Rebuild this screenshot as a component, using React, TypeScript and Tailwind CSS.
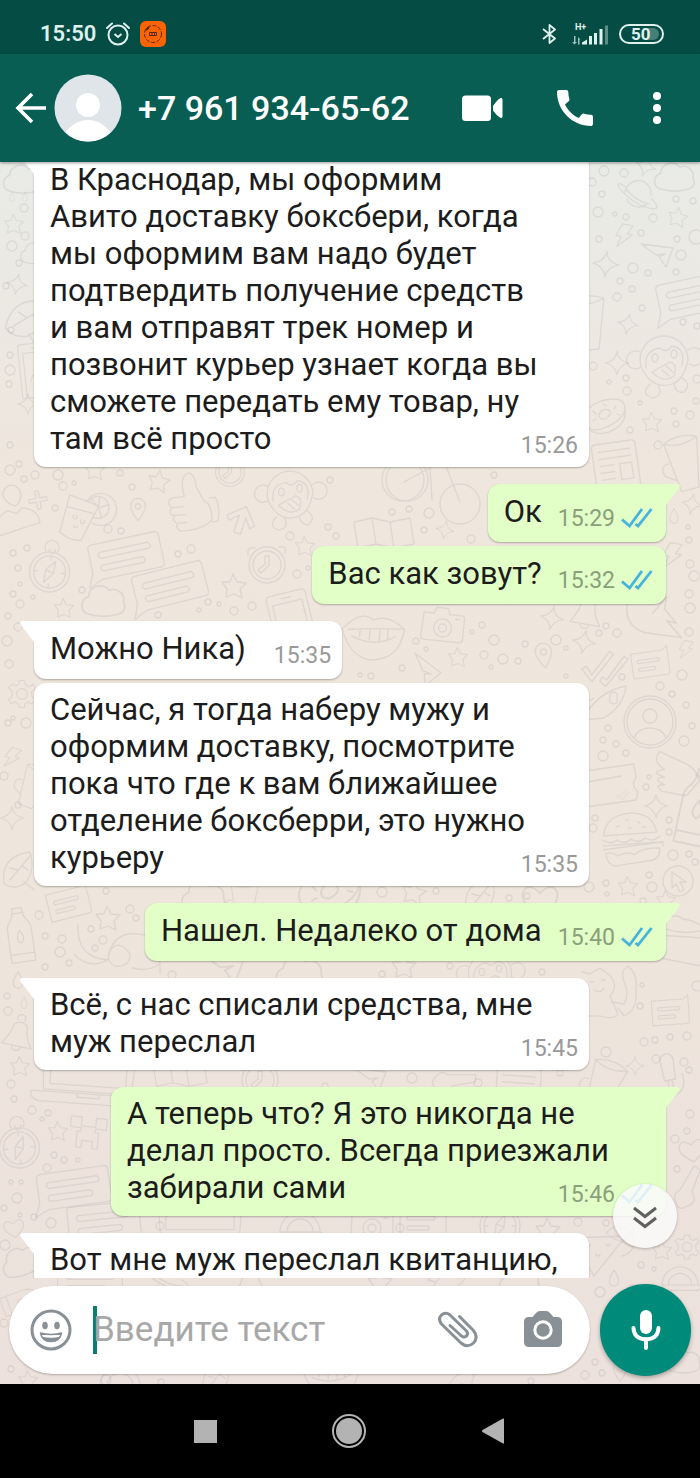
import type { ReactNode } from 'react';

interface Message {
  id: number;
  text: string;
  time?: string;
  out?: boolean;
  tail?: boolean;
  wide?: boolean;
}

const messages: Message[] = [
  {
    id: 1,
    text: 'В Краснодар, мы оформим\nАвито доставку боксбери, когда\nмы оформим вам надо будет\nподтвердить получение средств\nи вам отправят трек номер и\nпозвонит курьер узнает когда вы\nсможете передать ему товар, ну\nтам всё просто',
    time: '15:26',
    tail: true,
    wide: true,
  },
  { id: 2, text: 'Ок', time: '15:29', out: true, tail: true },
  { id: 3, text: 'Вас как зовут?', time: '15:32', out: true },
  { id: 4, text: 'Можно Ника)', time: '15:35', tail: true },
  {
    id: 5,
    text: 'Сейчас, я тогда наберу мужу и\nоформим доставку, посмотрите\nпока что где к вам ближайшее\nотделение боксберри, это нужно\nкурьеру',
    time: '15:35',
    wide: true,
  },
  { id: 6, text: 'Нашел. Недалеко от дома', time: '15:40', out: true, tail: true },
  { id: 7, text: 'Всё, с нас списали средства, мне\nмуж переслал', time: '15:45', tail: true, wide: true },
  {
    id: 8,
    text: 'А теперь что? Я это никогда не\nделал просто. Всегда приезжали\nзабирали сами',
    time: '15:46',
    out: true,
    tail: true,
    wide: true,
  },
  { id: 9, text: 'Вот мне муж переслал квитанцию,', tail: true, wide: true },
];

// Line drawings used by the wallpaper, each centred on 0,0
const shapes: Record<string, string> = {
  star: 'M-1 -12L3 -4L12 -3L6 3L8 12L0 8L-8 11L-7 3L-12 -4L-4 -4Z',
  spark: 'M0 -13Q1 -2 13 0Q2 2 0 13Q-2 2 -13 0Q-2 -2 0 -13Z',
  plus: 'M-2 -10H2V-2H10V2H2V10H-2V2H-10V-2H-2Z',
  bolt: 'M-4 -13H8L3 -3H9L-6 13L-3 1H-9Z',
  drop: 'M0 -9Q6 0 5 4A5 5 0 0 1 -5 4Q-6 0 0 -9Z',
  cloud: 'M-13 9A7 7 0 0 1 -12 -4A9 9 0 0 1 4 -9A8 8 0 0 1 15 0A6 6 0 0 1 12 9Q0 13 -13 9Z',
  heart: 'M0 12Q-15 2 -12 -6Q-8 -13 0 -5Q8 -13 12 -6Q15 2 0 12Z',
  chat: 'M-36 -14Q-36 -18 -32 -18H32Q36 -18 36 -14V14Q36 18 32 18H-28L-42 24L-36 10ZM-25 -9H24Q28 -5 24 -3H-25Q-29 -6 -25 -9M-25 4H16Q20 7 16 10H-25Q-29 7 -25 4',
  note: 'M-20 -15H20L26 -20V12Q26 16 22 16H-20ZM-12 -6H14Q16 -4 14 -2H-12Q-14 -4 -12 -6M-12 4H8Q10 6 8 8H-12Q-14 6 -12 4',
  compass: 'M-20 4A20 20 0 1 0 20 4A20 20 0 1 0 -20 4M-16 4A16 16 0 1 0 16 4A16 16 0 1 0 -16 4M5 -7L-4 2L-5 15L4 5ZM-4 2L4 5M-6 -17A7 7 0 1 1 6 -17M-2 -19A3 3 0 1 0 3 -19M0 -12V-8M0 16V20M-16 4H-12M12 4H16',
  gear: 'M-3 -15H3L4 -10L8 -8L12 -11L15 -6L11 -3V3L15 7L11 11L7 9L3 11V15H-3L-4 11L-8 9L-12 11L-15 6L-11 3V-3L-15 -7L-11 -11L-7 -9L-4 -10ZM-6 0A6 6 0 1 0 6 0A6 6 0 1 0 -6 0',
  planet: 'M-13 0A13 13 0 0 1 13 -1M-10 7A13 13 0 0 0 10 9M-14 -5Q-24 -10 -20 -3Q0 13 18 12Q25 10 14 2M-13 -3Q0 8 13 8',
  plane: 'M-16 -10L16 -6L9 13L2 3L8 0L-1 1Z',
  monkey: 'M-24 2A24 24 0 1 1 24 2Q20 22 8 26Q-4 30 -14 22Q-24 12 -24 2ZM-24 -6A9 9 0 1 0 -23 9M24 -8A9 9 0 1 1 25 6M-18 10Q-20 -8 -4 -10Q2 -4 8 -12Q22 -10 18 8M-12 0A3 4 0 1 0 -6 0A3 4 0 1 0 -12 0M7 -4A3 4 0 1 0 13 -4A3 4 0 1 0 7 -4M-12 14L6 4Q14 6 10 18Q0 26 -12 14M-2 12L5 18M2 8L9 14M-14 26Q-24 36 -12 40Q0 38 -6 27M10 26Q12 36 20 34Q28 26 18 20',
  donut: 'M-20 6Q-24 -6 -4 -14Q18 -20 20 -8Q20 6 -4 14Q-16 18 -20 6M-19 10Q-12 22 4 17Q22 10 20 -6M-6 0Q-4 -7 4 -5Q8 0 0 4Q-6 5 -6 0M-12 -4L-9 -1M-2 -11L1 -9M11 -9L9 -6M-12 6L-9 4M12 -1L15 0',
  page: 'M-24 -20Q-24 -24 -20 -24H16Q20 -24 20 -20V28M-24 -20V28M-18 -16H14M-18 -9H14M-18 -2H-4M-18 5H-4M-18 12H-4M2 -2H14V14H2Z',
  thumb: 'M-16 -8H-5Q-8 -30 2 -31Q8 -29 8 -16L14 -2Q22 2 20 18Q12 26 -4 26H-12Q-18 22 -14 18Q-20 16 -17 10Q-23 8 -19 2Q-24 -6 -16 -8M-19 2H-7M-17 10H-6M-14 18H-5M20 -4H26Q30 6 26 20H20',
  glass: 'M-12 -16L18 -8L4 28Q-8 30 -18 22ZM-13 -4L13 0M6 -12A16 16 0 1 1 14 10M8 -12A11 11 0 1 1 14 4M18 -6L10 -14M18 -6L27 -10M18 -6L22 3M18 -6L18 -17M-6 4A2 2 0 1 0 -3 4M2 8A2 2 0 1 0 5 8M-5 14A2 2 0 1 0 -1 14',
  person: 'M-9 -16A9 10 0 1 1 9 -14Q6 -4 2 -4Q-6 -6 -9 -16M-20 24Q-20 2 -6 0L2 4L8 -1Q24 2 24 16Z',
  arrow: 'M-4 14V-4L-12 4L-16 0L0 -14L14 2L10 6L3 -3V14Z',
  clock: 'M-18 0A18 18 0 1 0 18 0A18 18 0 1 0 -18 0M-14 0A14 14 0 1 0 14 0A14 14 0 1 0 -14 0M-2 -9H2V0L-6 8L-9 5L-2 -1ZM-19 -10Q-20 -19 -12 -17M12 -18Q20 -20 18 -12',
  phone: 'M-20 -26Q-20 -30 -16 -30H16Q20 -30 20 -26V30H-20ZM-15 -20H15V30H-15ZM-5 -25H5M-9 12A9 9 0 1 1 9 12M-5 12A5 5 0 1 1 5 12',
  camera: 'M-20 -10H-10L-8 -16H4L6 -10H18Q21 -10 21 -7V14Q21 17 18 17H-18Q-21 17 -21 14ZM-9 4A9 9 0 1 0 9 4A9 9 0 1 0 -9 4M-4 4A4 4 0 1 0 4 4A4 4 0 1 0 -4 4M12 -6H16',
  bike: 'M-46 0A21 21 0 1 0 -4 0A21 21 0 1 0 -46 0M-42 0A17 17 0 1 0 0 0A17 17 0 1 0 -42 0M12 24A20 20 0 1 0 52 24A20 20 0 1 0 12 24M-24 2L2 -12L14 -24M2 -12L4 20M14 -24L32 22M20 -28L10 -30',
  map: 'M-30 -10L-12 -14L6 -10L26 -14L30 12L10 16L-8 12L-26 16ZM-12 -14L-8 12M6 -10L10 16',
  lips: 'M-30 0Q-12 -22 0 -12Q14 -20 32 -6Q30 26 0 28Q-20 26 -30 0ZM-24 0Q0 -4 30 -6M-20 6Q4 16 24 2M-12 0V6M-2 -2V8M8 -3V8M16 -4V6',
  bell: 'M-14 12Q-6 -2 -6 -8A8 8 0 0 1 8 -8Q8 2 16 12ZM-4 12A4 4 0 0 0 5 12M-3 -14A4 4 0 1 1 4 -14',
  pin: 'M0 12Q-9 0 -8 -5A8 8 0 0 1 8 -5Q9 0 0 12ZM-3 -4A3 3 0 1 0 3 -4A3 3 0 1 0 -3 -4',
  flame: 'M-18 -16Q-24 8 -4 14L26 18L14 4L22 6L12 -6L14 -16L2 -2',
  rocket: 'M-20 16L-14 4Q0 -14 22 -18Q20 2 0 14ZM6 -6A4 4 0 1 0 13 -6A4 4 0 1 0 6 -6M-14 4L-22 2L-10 -6',
  avatar: 'M-26 0A26 26 0 1 0 26 0A26 26 0 1 0 -26 0M-23 0A23 23 0 1 0 23 0A23 23 0 1 0 -23 0M-7 -6A7 7 0 1 0 7 -6A7 7 0 1 0 -7 -6M-16 16Q-12 6 0 6Q12 6 16 16',
  burger: 'M-27 -6Q-24 -26 0 -27Q24 -26 26 -6ZM-28 -2Q-20 4 -14 -1Q-6 5 0 -1Q8 5 14 -1Q22 4 29 -2M-28 8L0 6L32 4M-28 4H30L32 8M-26 12Q-20 10 -14 15Q-4 10 2 15Q12 8 28 10Q28 22 16 22L-18 25Q-26 22 -26 12M-14 -14L-11 -15M-4 -20H-1M8 -18L10 -16M-2 -12H1M12 -12H15',
  hand: 'M-20 -22L2 -12Q12 -8 16 4L4 18L-18 14Q-26 8 -16 8Q-28 2 -16 1Q-30 -4 -16 -6Q-28 -14 -20 -22',
  cursor: 'M-15 0A15 15 0 1 0 15 0A15 15 0 1 0 -15 0M-6 -9L-6 7L-2 3L2 11L6 9L2 1H8Z',
  ticket: 'M-50 -10L20 -20L22 -6Q16 0 24 8L22 16L-50 26ZM-50 2L8 -8',
  checks: 'M-18 4L-14 1L-8 8L4 -16L8 -14L-7 14ZM2 8L6 10L18 -14L22 -12L6 16L0 12Z',
  leaf: 'M-14 12Q-18 -16 12 -20Q18 0 6 12Q-4 18 -14 12ZM12 -16L-8 8M0 -2L-8 -4M4 -6L10 -2M6 10L16 18',
  bottle: 'M-8 -14Q-4 -20 -5 -26H5Q4 -20 8 -14Q12 -10 12 -4V28H-12V-4Q-12 -10 -8 -14M-12 20H12M0 -4Q6 6 0 9Q-6 6 0 -4M-6 -21H6',
  elephant: 'M-30 -20Q-32 14 0 16Q2 -6 20 -10Q40 -12 52 0V30M0 16Q-20 26 -34 10M4 4Q12 -4 22 10Q22 24 6 22Q-4 14 4 4M24 24Q40 28 52 20',
  laptop: 'M-46 -20L-44 10H44L46 -20ZM-56 12H56Q56 22 48 22H-48Q-58 20 -56 12M-10 12V16H12V12M-38 -20V4H38V-20',
  creeper: 'M-20 -16H-8V-6H8V-16H20V-4H8V0H12V18H6V10H-6V18H-12V0H-8V-4H-20Z',
  dog: 'M-22 -20L-14 -18L-4 -24L4 -18Q16 -8 6 4L14 22Q10 28 -4 24H-22M8 10L20 12Q26 2 20 -10Q16 -22 24 -26Q34 -18 32 -2Q34 18 20 24L14 16M-14 -10H-11M-2 -12H1M-10 -2Q-4 2 0 -4',
  mic: 'M-6 -18A6 6 0 0 1 6 -18L5 0H-5ZM-2 0V16M2 0V16M12 -4Q14 10 4 14',
  cake: 'M-26 4Q-10 -22 0 -14Q22 -14 30 2M-24 4L30 0L22 26L-16 24ZM-20 -4Q4 2 24 -8',
  pizza: 'M-30 -8L24 -10L-8 30ZM4 -12A15 15 0 1 1 20 10M6 -10L20 -4L30 -14M20 -4L32 2M20 -4V-18M-16 -2A2 2 0 1 0 -12 -2M-6 8A2 2 0 1 0 -2 8M4 -2A2 2 0 1 0 8 -2',
  guitar: 'M10 -24L16 -20L8 2Q14 12 4 16Q-6 22 -8 12Q-12 4 -4 0Z',
  rainbow: 'M-20 10A20 20 0 0 1 20 10ZM-13 10A13 13 0 0 1 13 10M-20 10Q-20 18 -10 16H20Q26 12 20 10',
  cup: 'M-16 -20Q0 -28 18 -20L8 30H-10ZM-16 -20Q0 -12 18 -20M-16 0Q-26 0 -22 12L-12 18',
};

// [shape, x, y, scale, rotation]
const doodles: [string, number, number, number, number][] = [
  ['spark', 646, 166, 0.8, 20], ['cloud', 675, 178, 1.2, 0], ['planet', 638, 194, 1, 10],
  ['star', 678, 217, 0.8, 10], ['bolt', 624, 236, 0.9, 10], ['plane', 657, 254, 1, 0],
  ['spark', 606, 264, 1, 5], ['chat', 694, 296, 1, -12], ['cup', 588, 320, 1, -6],
  ['spark', 628, 324, 0.8, 10], ['monkey', 664, 358, 1, 0], ['spark', 617, 363, 0.9, 0],
  ['donut', 605, 415, 1, 0], ['star', 652, 422, 0.8, 0], ['page', 618, 466, 1, -8], ['cup', 684, 460, 1, -14],
  ['cloud', 24, 180, 1.2, 0], ['drop', 12, 197, 0.5, 0], ['drop', 25, 197, 0.5, 0],
  ['star', 14, 224, 0.8, 0], ['cloud', 36, 254, 0.9, 0], ['spark', 17, 284, 0.8, 10],
  ['leaf', 26, 320, 1.2, 20], ['phone', 38, 370, 0.9, -6], ['spark', 28, 404, 0.8, 0],
  ['person', 14, 510, 1, -8], ['plus', 38, 500, 0.9, -10], ['glass', 80, 512, 1, 6],
  ['star', 95, 470, 0.8, 0], ['star', 159, 481, 0.9, 10], ['thumb', 190, 504, 1, -6],
  ['pin', 138, 510, 0.9, 0], ['arrow', 242, 520, 1, 18], ['clock', 230, 472, 0.8, 0],
  ['monkey', 290, 492, 0.95, 0], ['compass', 50, 568, 1, 6], ['chat', 126, 556, 1, -12],
  ['chat', 170, 586, 1, -14], ['clock', 267, 565, 1, 0], ['star', 305, 546, 0.8, 0],
  ['cloud', 104, 602, 1.3, 0], ['star', 234, 586, 1, 0], ['star', 64, 608, 0.8, 0],
  ['phone', 292, 622, 1, -14], ['bike', 428, 480, 1, 0], ['map', 384, 532, 1, 0],
  ['lips', 372, 632, 1, 6], ['camera', 443, 624, 1, 6], ['spark', 445, 530, 0.7, 10],
  ['spark', 552, 618, 0.9, 10], ['spark', 584, 642, 0.9, 10], ['bell', 586, 612, 1, 10],
  ['flame', 650, 616, 1.2, 0], ['spark', 692, 504, 0.8, 10], ['drop', 674, 516, 0.8, 0],
  ['bolt', 672, 556, 1, 10], ['star', 458, 657, 0.8, 0], ['plane', 424, 670, 1, 30],
  ['pin', 544, 656, 1, -8], ['checks', 602, 668, 1.1, 10], ['note', 648, 664, 0.8, -8],
  ['bolt', 686, 650, 0.7, 10], ['avatar', 650, 722, 1, 0], ['rocket', 604, 704, 1, 0],
  ['ticket', 614, 784, 1, 0], ['checks', 622, 795, 0.3, 10], ['spark', 656, 806, 0.9, 0],
  ['hand', 682, 776, 1.1, 0], ['bottle', 698, 806, 1.4, 12], ['burger', 631, 840, 1, -4],
  ['cursor', 678, 881, 1, 0], ['star', 628, 886, 0.8, 0], ['gear', 22, 694, 0.9, 0],
  ['bolt', 12, 758, 0.8, 20], ['spark', 12, 818, 0.9, 0], ['cup', 34, 784, 0.8, 20],
  ['leaf', 18, 872, 1, 0], ['note', 66, 904, 0.9, -14], ['bottle', 20, 934, 1, -8],
  ['star', 108, 918, 1, 0], ['elephant', 108, 944, 1, 0], ['drop', 18, 980, 0.9, 0],
  ['drop', 24, 1003, 0.6, 0], ['bell', 18, 1034, 1, 12], ['star', 20, 1066, 0.8, 0],
  ['laptop', 88, 1082, 1, 4], ['compass', 19, 1144, 1, -6], ['star', 58, 1131, 0.8, 0],
  ['creeper', 88, 1132, 0.9, 6], ['chat', 74, 1188, 1, -8], ['chat', 104, 1222, 1, -6],
  ['heart', 14, 1228, 0.8, -10], ['cloud', 22, 1262, 1.2, -20], ['bottle', 24, 1300, 0.8, 70],
  ['cloud', 204, 898, 1.3, 0], ['cup', 244, 900, 0.8, 0], ['donut', 330, 892, 1.5, 0],
  ['star', 414, 892, 1, 10], ['leaf', 480, 898, 1, 0], ['heart', 540, 900, 1.4, 0],
  ['plane', 222, 966, 1.4, 0], ['cloud', 300, 974, 1.4, 0], ['star', 404, 966, 1, 0],
  ['monkey', 490, 972, 0.9, 0], ['cake', 680, 934, 1.1, 8], ['star', 666, 900, 0.8, 0],
  ['dog', 604, 992, 1, 0], ['note', 668, 1012, 0.8, -4], ['cup', 604, 1084, 1, 20],
  ['spark', 635, 1066, 0.7, 0], ['mic', 670, 1080, 1.1, -10], ['heart', 692, 1150, 1, -10],
  ['guitar', 684, 1190, 1, 0], ['gear', 687, 1247, 0.8, 0], ['star', 662, 1250, 0.8, 0],
  ['pizza', 602, 1246, 1, 0], ['drop', 614, 1278, 0.9, 0], ['rainbow', 680, 1276, 0.9, 0],
  ['clock', 260, 1080, 1, 0], ['plane', 370, 1078, 1, 0], ['map', 180, 1072, 0.9, 0],
  ['guitar', 450, 1078, 1, 60], ['page', 520, 1092, 1, 4], ['laptop', 200, 1226, 0.9, 0],
  ['rainbow', 300, 1222, 1, 0], ['camera', 372, 1224, 1, 0], ['note', 420, 1222, 1, 0],
  ['compass', 500, 1222, 1, 0], ['star', 548, 1230, 1, 0], ['chat', 90, 1282, 0.9, 0],
  ['planet', 168, 1278, 1, 0], ['bell', 250, 1280, 1, 0], ['star', 380, 1282, 1, 0],
  ['rocket', 450, 1278, 1, 0], ['cloud', 520, 1282, 1.2, 0], ['star', 28, 1380, 0.8, 0],
  ['rainbow', 120, 1376, 1, 0], ['leaf', 216, 1380, 0.9, 0], ['lips', 330, 1372, 0.9, 0],
  ['bottle', 460, 1386, 0.8, 40], ['cloud', 684, 1362, 1, 0], ['pin', 620, 1372, 0.8, 0],
];

// [x, y, radius]
const dots: [number, number, number][] = [
  [604, 171, 5], [624, 173, 4], [592, 182, 4], [602, 194, 3], [598, 212, 5], [615, 214, 2],
  [626, 217, 3], [676, 199, 3], [693, 201, 3], [653, 218, 4], [641, 233, 3], [599, 239, 3],
  [677, 239, 3], [696, 237, 7], [681, 255, 5], [633, 268, 5], [648, 273, 3], [676, 272, 3],
  [620, 281, 3], [632, 289, 3], [617, 297, 4], [642, 308, 3], [683, 322, 3], [697, 326, 3],
  [593, 366, 4], [626, 378, 3], [609, 382, 2], [627, 391, 4], [697, 379, 4], [696, 401, 3],
  [640, 403, 2], [674, 411, 3], [690, 415, 4], [676, 424, 3], [658, 445, 4], [630, 430, 3],
  [12, 246, 5], [25, 236, 4], [24, 208, 4], [19, 263, 3], [6, 286, 3], [11, 330, 3],
  [10, 355, 3], [10, 370, 5], [9, 384, 3], [10, 445, 3], [10, 470, 5], [19, 464, 3],
  [24, 479, 3], [35, 475, 4], [58, 475, 5], [63, 486, 4], [74, 483, 2], [120, 473, 3],
  [132, 487, 3], [55, 508, 3], [108, 529, 4], [121, 531, 3], [178, 554, 3], [191, 549, 4],
  [290, 536, 4], [328, 527, 3], [336, 536, 3], [330, 480, 3], [13, 553, 3], [27, 548, 3],
  [18, 568, 3], [20, 584, 2], [13, 594, 3], [33, 597, 2], [20, 604, 4], [8, 616, 3],
  [82, 590, 3], [208, 602, 3], [219, 604, 2], [199, 610, 2], [158, 615, 3], [234, 611, 4],
  [252, 606, 4], [297, 574, 4], [308, 568, 2], [7, 641, 5], [9, 664, 4], [18, 627, 4],
  [494, 475, 3], [429, 513, 5], [392, 512, 3], [409, 509, 3], [424, 530, 3], [471, 539, 4],
  [689, 540, 3], [688, 527, 2], [690, 564, 4], [694, 576, 5], [689, 594, 4], [690, 608, 5],
  [482, 625, 3], [416, 641, 3], [426, 649, 2], [494, 640, 5], [525, 644, 3], [556, 640, 5],
  [472, 632, 2], [484, 655, 4], [503, 659, 5], [518, 661, 3], [491, 667, 2], [402, 668, 3],
  [371, 676, 3], [360, 675, 2], [566, 648, 2], [606, 626, 3], [617, 633, 4], [599, 633, 3],
  [682, 675, 5], [660, 686, 4], [672, 694, 3], [622, 677, 3], [566, 676, 2], [689, 632, 4],
  [686, 705, 3], [692, 726, 3], [684, 741, 5], [608, 728, 3], [603, 740, 3], [616, 744, 3],
  [603, 756, 5], [626, 753, 3], [649, 777, 2], [646, 787, 3], [595, 818, 3], [593, 828, 4],
  [669, 820, 3], [669, 832, 3], [673, 855, 5], [689, 854, 3], [695, 862, 3], [649, 875, 3],
  [589, 887, 5], [606, 883, 3], [607, 894, 2], [652, 887, 5], [643, 901, 3], [8, 723, 3],
  [26, 723, 5], [13, 718, 2], [4, 776, 4], [18, 805, 3], [39, 915, 4], [106, 891, 3],
  [130, 909, 4], [136, 918, 3], [45, 936, 3], [62, 939, 4], [91, 929, 3], [103, 940, 4],
  [95, 948, 3], [60, 952, 5], [69, 963, 3], [45, 967, 3], [7, 996, 3], [8, 1011, 4],
  [11, 1084, 4], [14, 1099, 3], [32, 1110, 4], [48, 1113, 3], [42, 1119, 2], [54, 1155, 3],
  [64, 1160, 3], [78, 1160, 2], [47, 1168, 4], [11, 1182, 2], [21, 1182, 2], [17, 1198, 5],
  [4, 1208, 3], [20, 1215, 2], [34, 1217, 3], [51, 1223, 5], [160, 1226, 4], [382, 892, 5],
  [436, 891, 3], [509, 898, 3], [527, 896, 3], [450, 966, 3], [382, 974, 3], [542, 972, 3],
  [172, 975, 4], [642, 985, 2], [640, 1006, 3], [697, 986, 5], [644, 1042, 4], [655, 1040, 3],
  [670, 1037, 3], [687, 1036, 4], [606, 1052, 5], [656, 1059, 4], [684, 1062, 4], [689, 1070, 3],
  [690, 1114, 4], [687, 1131, 3], [675, 1139, 4], [677, 1169, 3], [641, 1265, 3], [654, 1269, 2],
  [600, 1292, 5], [632, 1288, 3], [578, 1222, 4], [606, 1223, 3], [5, 1245, 5], [4, 1323, 4],
  [11, 1369, 3], [106, 1380, 5], [161, 1382, 3], [585, 1375, 4], [602, 1373, 3], [595, 1362, 3],
  [531, 1381, 3], [412, 1078, 5], [478, 1083, 4], [560, 1073, 3], [325, 1086, 3], [400, 1228, 4],
];

function Wallpaper() {
  return (
    <svg
      aria-hidden="true"
      className="absolute inset-0 h-full w-full"
      viewBox="0 162 700 1222"
      preserveAspectRatio="xMidYMin slice"
      fill="none"
      stroke="#7d8184"
      strokeOpacity="0.15"
      strokeWidth="1.3"
      strokeLinejoin="round"
      strokeLinecap="round"
    >
      {doodles.map(([name, x, y, scale, rotate], i) => (
        <path key={i} d={shapes[name]} transform={`translate(${x} ${y}) rotate(${rotate}) scale(${scale})`} />
      ))}
      {dots.map(([x, y, r], i) => (
        <circle key={i} cx={x} cy={y} r={r} />
      ))}
    </svg>
  );
}

function Ticks() {
  return (
    <svg viewBox="0 0 32 22" className="ml-1.5 h-[22px] w-8" fill="none" stroke="#46b3dd" strokeWidth="2.8">
      <path d="M1 11.5L8.5 18L21 1M14.5 16L17 18L30.5 1" />
    </svg>
  );
}

function Bubble({ message }: { message: Message }) {
  const { text, time, out, tail, wide } = message;
  const side = out ? 'self-end bg-[#e1ffc7] pr-[13px]' : 'self-start bg-white pr-[11px]';
  const size = wide ? 'w-[555px] max-w-full pt-2 pb-[10px]' : 'pt-[9px] pb-3';
  const corner = tail ? (out ? 'mt-[17px] rounded-tr-none' : 'mt-[17px] rounded-tl-none') : 'mt-1';

  return (
    <li className={`relative rounded-xl pl-4 shadow-[0_1px_2px_rgba(0,0,0,0.28)] ${side} ${size} ${corner}`}>
      {tail && !out && (
        <svg viewBox="0 0 15 22" className="absolute top-0 -left-[14px] h-[22px] w-[15px]" fill="#fff">
          <path d="M15 0H2Q-1 1 1 4L14 21L15 22Z" />
        </svg>
      )}
      {tail && out && (
        <svg viewBox="0 0 15 22" className="absolute top-0 -right-[14px] h-[22px] w-[15px]" fill="#e1ffc7">
          <path d="M0 0H13Q16 1 14 4L1 21L0 22Z" />
        </svg>
      )}
      <p className="text-[31px] leading-[37px] whitespace-pre-line text-[#1c1c1c]">
        {text}
        {time && (
          <span
            className={`float-right mt-[15px] flex items-center text-[23px] leading-[22px] ${
              out ? 'ml-4 text-[#8aa07b]' : 'ml-7 text-[#999999]'
            }`}
          >
            <time>{time}</time>
            {out && <Ticks />}
          </span>
        )}
      </p>
    </li>
  );
}

function IconButton({ label, className, children }: { label: string; className: string; children: ReactNode }) {
  return (
    <button type="button" aria-label={label} className={`flex shrink-0 items-center justify-center ${className}`}>
      {children}
    </button>
  );
}

function StatusBar() {
  return (
    <div className="flex h-[54px] shrink-0 items-center bg-[#054d44] pt-[14px] pr-9 pl-10 text-[#dff1ee]">
      <span className="text-[22px] leading-7 font-semibold">15:50</span>
      <svg viewBox="0 0 24 24" className="ml-[10px] size-6" fill="none" stroke="currentColor" strokeWidth="2">
        <circle cx="12" cy="13" r="9.5" />
        <path d="M1 6L6 1.5M23 6L18 1.5" strokeLinecap="round" />
        <path d="M8.5 12L12 15L15.5 12" />
      </svg>
      <span className="ml-[10px] flex size-[26px] items-center justify-center rounded-md bg-[#fb6304]">
        <svg viewBox="0 0 20 20" className="size-5" fill="none" stroke="#5a2a0c">
          <circle cx="10" cy="10" r="8.5" strokeDasharray="4 1.6" />
          <path d="M3 6L6 3" strokeWidth="2" />
          <path d="M6.5 8.5H13.5V11.5H6.5ZM9 8.5V11.5M11.5 8.5V11.5" />
        </svg>
      </span>
      <svg viewBox="0 0 14 22" className="ml-auto h-[22px] w-[14px]" fill="none" stroke="currentColor" strokeWidth="1.8">
        <path d="M1 6L13 15.5L7.5 20V2L13 6.5L1 16" strokeLinejoin="round" />
      </svg>
      <svg viewBox="0 0 38 24" className="ml-4 h-6 w-[38px]" fill="currentColor">
        <text x="3" y="8" fontSize="9" fontWeight="700">
          H+
        </text>
        <path d="M2 14H3.5V20H5L2.5 22.5L0 20H2ZM6 22.5V15L8.5 17.5H7.5V22.5Z" opacity="0.7" />
        <path d="M10 22.5V20.5L15 17.5V22.5ZM17 14H20V22.5H17ZM22 11H25V22.5H22ZM27.5 7H30.5V22.5H27.5Z" />
        <path d="M33 3.5H36V22.5H33Z" opacity="0.4" />
      </svg>
      <span className="relative ml-[9px] flex h-5 w-[45px] items-center rounded-full border-2 border-current pl-[10px] text-[17px] leading-4 font-bold">
        <span className="absolute top-[2px] right-[3px] h-3 w-3 rounded-r-full bg-[#467f78]" />
        <span className="relative">50</span>
      </span>
    </div>
  );
}

function Header() {
  return (
    <header className="z-10 flex h-[108px] shrink-0 items-center bg-[#095e54] pr-0.5 pl-[15px] text-white shadow-[0_1px_3px_rgba(0,0,0,0.4)]">
      <IconButton label="Назад" className="w-[31px]">
        <svg viewBox="0 0 31 32" className="h-8 w-[31px]" fill="none" stroke="currentColor" strokeWidth="3.6">
          <path d="M31 16H3M17 2L3 16L17 30" />
        </svg>
      </IconButton>
      <svg viewBox="0 0 68 68" className="ml-2 size-[68px] shrink-0">
        <clipPath id="avatar-clip">
          <circle cx="34" cy="34" r="33.5" />
        </clipPath>
        <circle cx="34" cy="34" r="33.5" fill="#dfe5e8" />
        <g fill="#fff" clipPath="url(#avatar-clip)">
          <circle cx="34" cy="31" r="12" />
          <circle cx="34" cy="72" r="26" />
        </g>
      </svg>
      <h1 className="ml-4 text-[34px] leading-10 font-medium whitespace-nowrap">+7 961 934-65-62</h1>
      <IconButton label="Видеозвонок" className="ml-auto h-20 w-[105px]">
        <svg viewBox="0 0 42 26" className="h-[26px] w-[42px]" fill="currentColor">
          <rect x="1" y="0.5" width="29" height="25.5" rx="3.5" />
          <path d="M32 11Q36 5 39.5 3Q41.5 2.5 41.5 5V21Q41.5 24 39 22.5Q35 20 32 15.5Z" />
        </svg>
      </IconButton>
      <IconButton label="Позвонить" className="h-20 w-[82px]">
        <svg viewBox="3 3 18 18" className="size-9" fill="currentColor">
          <path d="M20.01 15.38c-1.23 0-2.42-.2-3.53-.56-.35-.12-.74-.03-1.01.24l-1.57 1.97c-2.83-1.35-5.48-3.9-6.89-6.83l1.95-1.66c.27-.28.35-.67.24-1.02-.37-1.11-.56-2.3-.56-3.53 0-.54-.45-.99-.99-.99H4.19C3.65 3 3 3.24 3 3.99 3 13.28 10.73 21 20.01 21c.71 0 .99-.63.99-1.18v-3.45c0-.54-.45-.99-.99-.99z" />
        </svg>
      </IconButton>
      <IconButton label="Ещё" className="h-20 w-[82px]">
        <svg viewBox="0 0 8 32" className="h-8 w-2" fill="currentColor">
          <circle cx="4" cy="4" r="4" />
          <circle cx="4" cy="16" r="4" />
          <circle cx="4" cy="28" r="4" />
        </svg>
      </IconButton>
    </header>
  );
}

function Composer() {
  return (
    <form className="relative flex shrink-0 items-center gap-[10px] px-[9px] pt-[6px] pb-2">
      <div className="flex h-[88px] min-w-0 flex-1 items-center rounded-full bg-white pr-[27px] pl-[21px] text-[#899197] shadow-[0_1px_2px_rgba(0,0,0,0.25)]">
        <IconButton label="Эмодзи" className="size-[42px]">
          <svg viewBox="0 0 42 42" className="size-[42px]">
            <circle cx="21" cy="21" r="19" fill="none" stroke="currentColor" strokeWidth="3" />
            <ellipse cx="15" cy="16.5" rx="2.8" ry="3.8" fill="currentColor" />
            <ellipse cx="27" cy="16.5" rx="2.8" ry="3.8" fill="currentColor" />
            <path
              d="M10.5 24Q21 27 31.5 24Q30 32.5 21 32.5Q12 32.5 10.5 24Z"
              fill="none"
              stroke="currentColor"
              strokeWidth="1.5"
              strokeLinejoin="round"
            />
            <path d="M11.5 27.5Q21 30 30.5 27.5Q28 33 21 33Q14 33 11.5 27.5Z" fill="currentColor" />
          </svg>
        </IconButton>
        <span className="-mr-1 ml-[21px] h-12 w-1 shrink-0 bg-[#06806f]" />
        <input
          type="text"
          aria-label="Введите текст"
          placeholder="Введите текст"
          className="min-w-0 flex-1 bg-transparent text-[35px] leading-10 text-[#1c1c1c] outline-none placeholder:text-[#a8a8a8]"
        />
        <IconButton label="Прикрепить" className="h-[42px] w-[42px]">
          <svg viewBox="0 0 42 42" className="size-[42px]" fill="none" stroke="currentColor" strokeWidth="3">
            <path
              d="M22.5 7.5L36 21Q42 28 36.5 34Q30.5 39.5 24 34L4.5 15Q0.5 10 4.5 6Q8.5 2.5 13 6L29.5 22Q31.5 24.5 29.5 27Q27 29 24.5 27L13 16.5"
              strokeLinecap="round"
              strokeLinejoin="round"
            />
          </svg>
        </IconButton>
        <IconButton label="Камера" className="ml-11 h-[42px] w-10">
          <svg viewBox="0 0 40 38" className="h-[38px] w-10">
            <path
              d="M6 6H9.500L13 2Q14.500 0 17 0H23Q25.500 0 27 2L30.500 6H34Q39 6 39 11V31Q39 36 34 36H6Q1 36 1 31V11Q1 6 6 6Z"
              fill="currentColor"
            />
            <circle cx="20" cy="19" r="8.2" fill="none" stroke="#fff" strokeWidth="3" />
          </svg>
        </IconButton>
      </div>
      <IconButton
        label="Голосовое сообщение"
        className="h-[92px] w-[91px] rounded-full bg-[#008a7a] text-white shadow-[0_2px_4px_rgba(0,0,0,0.3)]"
      >
        <svg viewBox="0 0 30 42" className="h-[42px] w-[30px]" fill="none" stroke="currentColor" strokeWidth="4">
          <rect x="9" y="1" width="12" height="24" rx="6" fill="currentColor" stroke="none" />
          <path d="M2.5 19Q3 30 15 30.5Q27 30 27.5 19M15 30V39" strokeLinecap="round" />
        </svg>
      </IconButton>
    </form>
  );
}

function NavBar() {
  return (
    <nav className="flex h-[94px] shrink-0 items-center justify-center bg-black pr-0.5 text-[#b3b3b3]">
      <IconButton label="Последние" className="h-20 w-36">
        <span className="size-[23px] bg-current" />
      </IconButton>
      <IconButton label="Домой" className="h-20 w-36">
        <span className="flex size-[34px] items-center justify-center rounded-full border-2 border-current">
          <span className="size-[26px] rounded-full bg-current" />
        </span>
      </IconButton>
      <IconButton label="Назад" className="h-20 w-36">
        <svg viewBox="0 0 22 26" className="h-[26px] w-[22px]" fill="currentColor">
          <path d="M21 0.5Q22 0 22 1.5V24.5Q22 26 21 25.5L0.5 14Q-0.5 13 0.5 12Z" />
        </svg>
      </IconButton>
    </nav>
  );
}

export default function App() {
  return (
    <div className="flex h-screen flex-col overflow-hidden font-[Roboto,sans-serif]">
      <StatusBar />
      <Header />
      <main className="relative flex min-h-0 flex-1 flex-col bg-[linear-gradient(#e9ebe7,#efe6dd_25%,#eee5dc_60%,#ece1dc)]">
        <Wallpaper />
        <div className="relative min-h-0 flex-1 overflow-hidden">
          {/* the list is scrolled a little past the top of the first bubble */}
          <ul className="-mt-[26px] flex flex-col pr-[34px] pl-[34px]">
            {messages.map((message) => (
              <Bubble key={message.id} message={message} />
            ))}
          </ul>
          <button
            type="button"
            aria-label="Вниз"
            className="absolute right-[23px] bottom-[30px] flex size-16 items-center justify-center rounded-full bg-[#fafafa]/85 text-[#606060] shadow-[0_1px_3px_rgba(0,0,0,0.25)]"
          >
            <svg viewBox="0 0 24 24" className="mt-1 size-6" fill="none" stroke="currentColor" strokeWidth="3">
              <path d="M1 2L12 10.5L23 2M1 12L12 20.5L23 12" />
            </svg>
          </button>
        </div>
        <Composer />
      </main>
      <NavBar />
    </div>
  );
}
